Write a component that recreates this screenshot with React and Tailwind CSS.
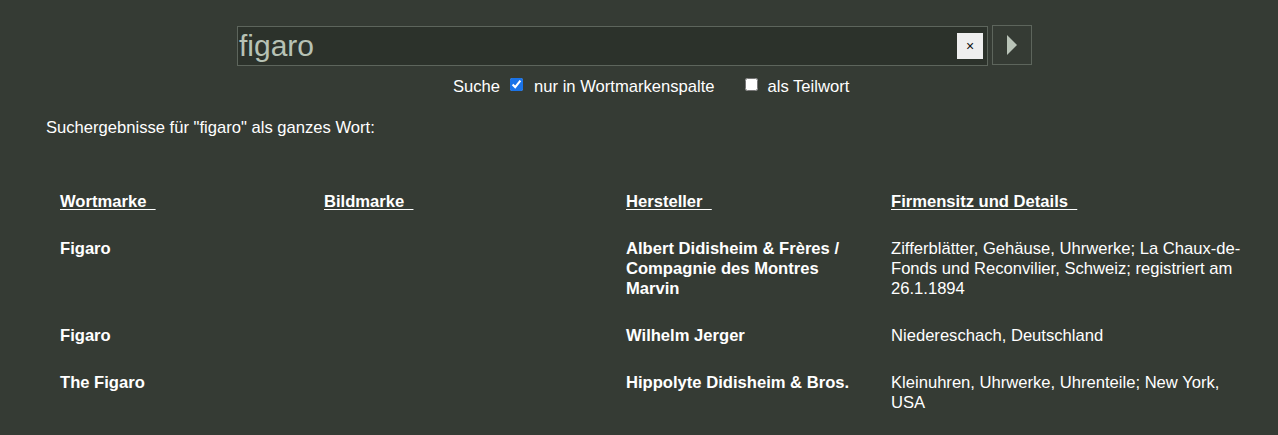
const rows = [
  {
    wort: "Figaro",
    bild: "",
    hersteller: "Albert Didisheim & Frères / Compagnie des Montres Marvin",
    details: "Zifferblätter, Gehäuse, Uhrwerke; La Chaux-de-Fonds und Reconvilier, Schweiz; registriert am 26.1.1894",
  },
  {
    wort: "Figaro",
    bild: "",
    hersteller: "Wilhelm Jerger",
    details: "Niedereschach, Deutschland",
  },
  {
    wort: "The Figaro",
    bild: "",
    hersteller: "Hippolyte Didisheim & Bros.",
    details: "Kleinuhren, Uhrwerke, Uhrenteile; New York, USA",
  },
];

const headers = ["Wortmarke", "Bildmarke", "Hersteller", "Firmensitz und Details"];

export default function App() {
  return (
    <div className="min-h-screen bg-[#353b34] text-white font-['Liberation_Sans',Arial,sans-serif] text-[16.6px] leading-5">
      {/* Search */}
      <div className="flex items-center pt-[24px] pl-[237px]">
        <div className="flex items-center w-[751px] h-[40px] mt-[2px] bg-[#2c322b] border border-[#5d655c]">
          <span className="flex-1 pl-[1px] text-[30px] leading-none text-[#b7c2b5]">figaro</span>
          <button className="w-[26px] h-[26px] mr-[4px] bg-[#efefef] text-[#111] text-[14px] flex items-center justify-center">
            ×
          </button>
        </div>
        <button className="ml-[4px] w-[40px] h-[40px] border border-[#5d655c] flex items-center justify-center">
          <svg width="12" height="20" viewBox="0 0 12 20">
            <path d="M1 0 L11 10 L1 20 Z" fill="#b9c4b8" />
          </svg>
        </button>
      </div>

      <div className="flex items-center mt-[11px] pl-[453px] h-5">
        <span>Suche</span>
        <input type="checkbox" defaultChecked className="ml-[10px] w-[13px] h-[13px] accent-[#1a73e8] -mt-[6px]" />
        <span className="ml-[11px]">nur in Wortmarkenspalte</span>
        <input type="checkbox" className="ml-[30px] w-[13px] h-[13px] -mt-[6px]" />
        <span className="ml-[10px]">als Teilwort</span>
      </div>

      <p className="mt-[21px] pl-[46px]">Suchergebnisse für "figaro" als ganzes Wort:</p>

      {/* Results table */}
      <div className="mt-[54px] pl-[60px] grid grid-cols-[264px_302px_265px_360px] gap-y-[27px] font-bold">
        {headers.map((h) => (
          <a key={h} className="underline underline-offset-2 whitespace-pre">
            {h + "\u00a0\u00a0"}
          </a>
        ))}
        {rows.map((r, i) => (
          <div key={i} className="contents">
            <div>{r.wort}</div>
            <div>{r.bild}</div>
            <div className="pr-[20px]">{r.hersteller}</div>
            <div className="font-normal">{r.details}</div>
          </div>
        ))}
      </div>
    </div>
  );
}
